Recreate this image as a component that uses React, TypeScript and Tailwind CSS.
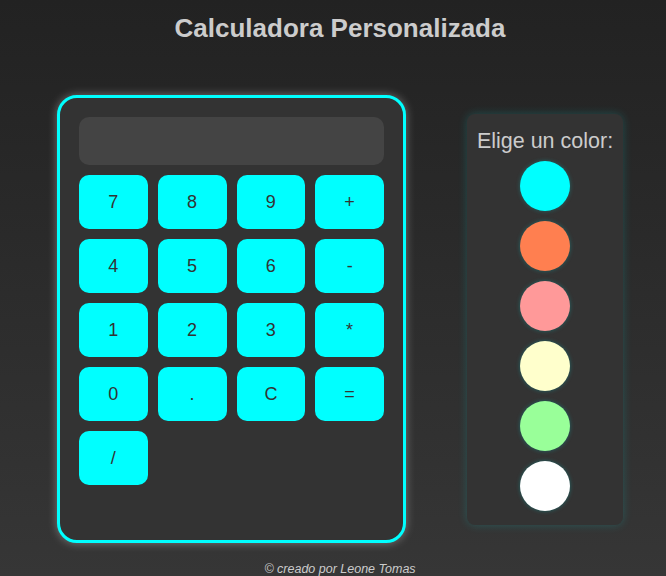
import React from 'react';

const keys = ['7', '8', '9', '+', '4', '5', '6', '-', '1', '2', '3', '*', '0', '.', 'C', '=', '/'];

const swatches = ['#00ffff', '#ff7f50', '#ff9999', '#ffffcc', '#99ff99', '#ffffff'];

const App: React.FC = () => {
  return (
    <div
      className="min-h-[576px] w-full flex flex-col items-center pl-[14px] bg-gradient-to-b from-[#222222] to-[#363636] text-[#cccccc]"
      style={{ fontFamily: '"Liberation Sans", Arial, sans-serif' }}
    >
      <h1 className="pt-[13px] text-[26px] leading-[30px] font-bold text-[#cccccc]">
        Calculadora Personalizada
      </h1>

      <div className="mt-[52px] flex items-center gap-[61px]">
        {/* Calculator */}
        <div className="w-[349px] h-[448px] rounded-[20px] border-[3px] border-[#00ffff] bg-[#333333] p-[19px] shadow-[0_0_10px_rgba(255,255,255,0.35)]">
          <div className="h-[48px] rounded-[10px] bg-[#444444]" />
          <div className="mt-[10px] grid grid-cols-4 gap-[10px]">
            {keys.map((k) => (
              <button
                key={k}
                className="h-[54px] rounded-[10px] bg-[#00ffff] text-[18px] text-[#333333] flex items-center justify-center"
              >
                {k}
              </button>
            ))}
          </div>
        </div>

        {/* Color picker */}
        <div className="w-[156px] h-[411px] rounded-[8px] bg-[#333333] pt-[15px] flex flex-col items-center shadow-[0_0_10px_rgba(0,255,255,0.18)]">
          <h2 className="text-[21.5px] leading-[25px] text-[#cccccc] whitespace-nowrap">Elige un color:</h2>
          <div className="mt-[7px] flex flex-col gap-[10px]">
            {swatches.map((c) => (
              <div
                key={c}
                className="w-[50px] h-[50px] rounded-full shadow-[0_0_4px_rgba(0,200,200,0.35)]"
                style={{ backgroundColor: c }}
              />
            ))}
          </div>
        </div>
      </div>

      <p className="mt-[19px] text-[12.5px] leading-[14px] italic text-[#cccccc]">© creado por Leone Tomas</p>
    </div>
  );
};

export default App;
